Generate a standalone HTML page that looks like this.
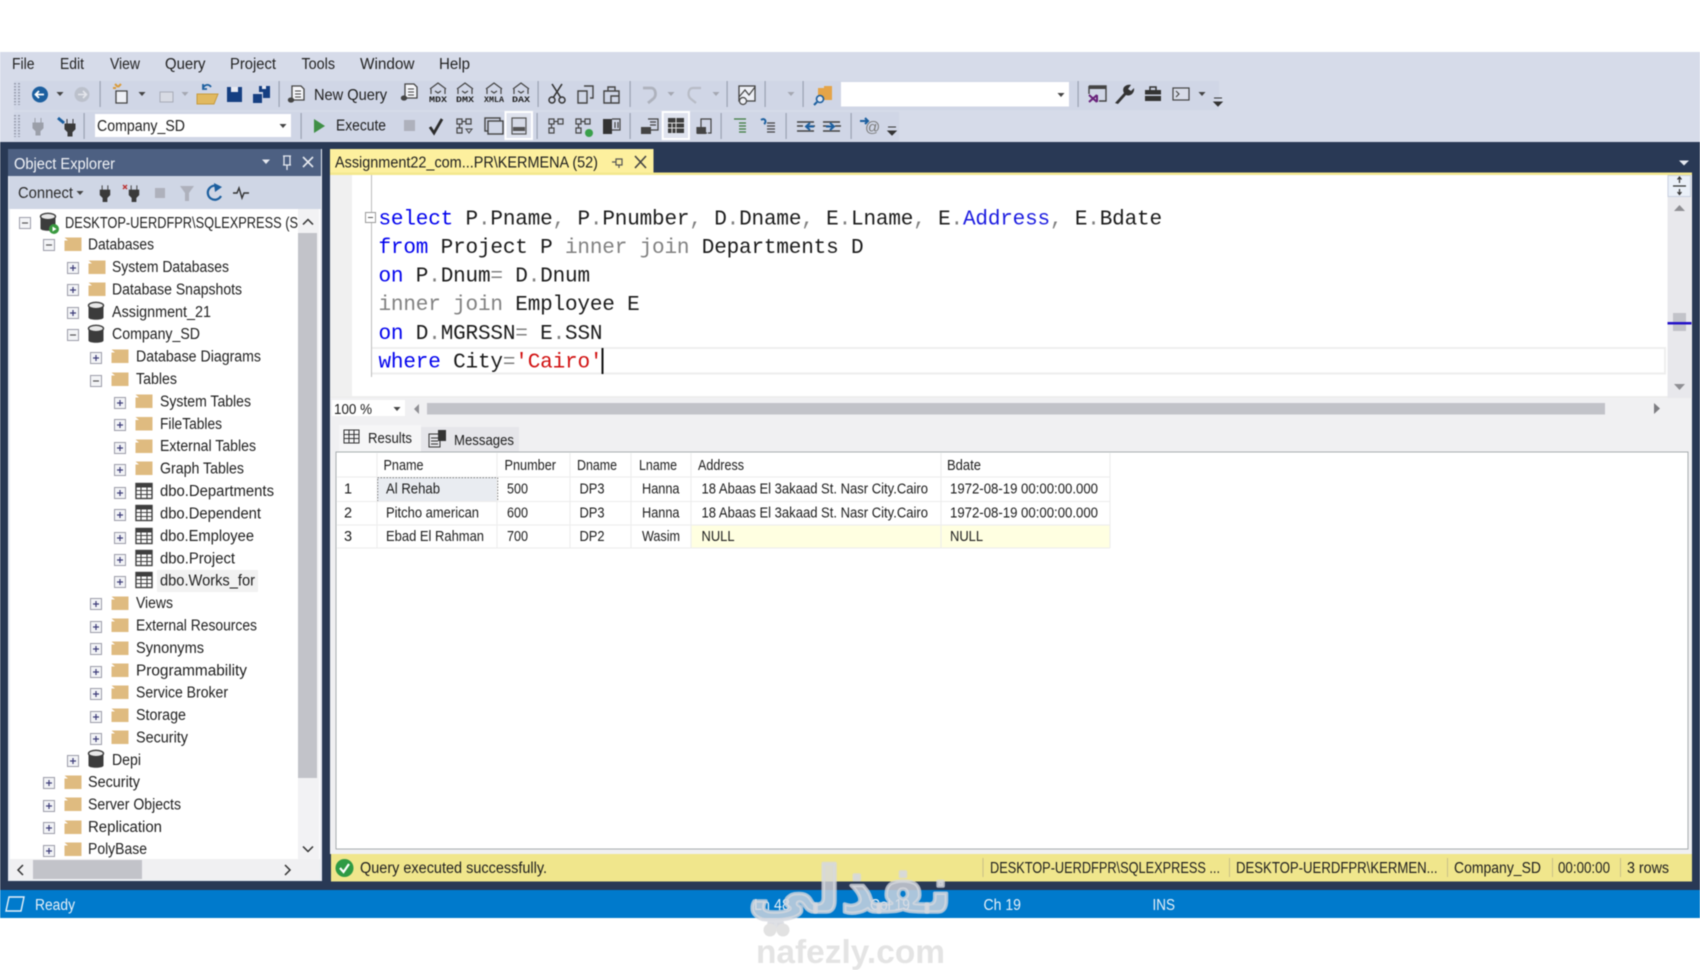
<!DOCTYPE html>
<html><head><meta charset="utf-8"><title>SSMS</title>
<style>
html,body{margin:0;padding:0;background:#fff;width:1700px;height:970px;overflow:hidden}
svg{display:block;filter:blur(.55px)}
text{font-family:"Liberation Sans",sans-serif;font-size:15.5px;fill:#1e1e1e;white-space:pre}
.m{font-size:15.5px;fill:#222}
.g{font-size:14.5px;fill:#1c1c1c}
.c{font-family:"Liberation Mono",monospace;font-size:21px;letter-spacing:-.17px;fill:#1a1a1a}
.s{fill:#e6f0f8;font-size:15.5px}
</style></head><body>
<svg width="1700" height="970" viewBox="0 0 1700 970" xmlns="http://www.w3.org/2000/svg">
<defs>
<g id="plus"><rect x="-5.5" y="-5.5" width="11" height="11" fill="#f3f4f7" stroke="#9c9ca8"/><path d="M-3,0H3M0,-3V3" stroke="#3c3c78" stroke-width="1.2"/></g>
<g id="minus"><rect x="-5.5" y="-5.5" width="11" height="11" fill="#f3f4f7" stroke="#9c9ca8"/><path d="M-3,0H3" stroke="#555" stroke-width="1.2"/></g>
<path id="folder" d="M-8.5,-6.5H8.5V7H-8.5V-3.5L-5,-3.5Z" fill="#dfbb80"/>
<g id="db"><path d="M-7.5,-6V6.5C-7.5,9.5 7.5,9.5 7.5,6.5V-6Z" fill="#3c3c3c"/><ellipse cx="0" cy="-5.5" rx="7.5" ry="3.2" fill="#e8e8e8" stroke="#3c3c3c" stroke-width="1.4"/></g>
<g id="tbl"><rect x="-8" y="-7.5" width="16" height="15" fill="#fff" stroke="#3f3f3f" stroke-width="1.4"/><rect x="-8" y="-7.5" width="16" height="4" fill="#3f3f3f"/><path d="M-8,-.5H8M-8,3.5H8M-3,-7V7.5M3,-7V7.5" stroke="#3f3f3f" stroke-width="1.1"/></g>
<g id="arr"><path d="M-3.5,-2H3.5L0,2Z" fill="#444"/></g>
<g id="arrg"><path d="M-3.5,-2H3.5L0,2Z" fill="#a5a8b2"/></g>
<g id="sep"><rect x="-.5" y="-13" width="1.2" height="26" fill="#9ba2b3"/></g>
<g id="grip"><path d="M-3,-11V11M1,-11V11" stroke="#9a9faf" stroke-width="2" stroke-dasharray="1.5 1.5"/></g>
<g id="cube"><path d="M-8,-1L0,-7L8,-1M-7,-1V4M7,-1V4M-3,1L0,3L3,1" fill="none" stroke="#444" stroke-width="1.2"/></g>
<g id="doc"><path d="M-6,-8H3L6,-5V6H-6Z" fill="#f5f6fa" stroke="#444" stroke-width="1.3"/><path d="M-3,-3H3M-3,0H3M-3,3H3" stroke="#444" stroke-width="1.1"/><ellipse cx="-7" cy="6" rx="3.2" ry="2.6" fill="#444"/></g>
<g id="tree"><path d="M-7,-7H-2V-2H-7ZM2,-7H7V-2H2ZM-7,2H-2V7H-7ZM-2,-4.5H2M-4.5,-2V2" fill="none" stroke="#444" stroke-width="1.2"/></g>
<g id="plug"><path d="M-3,-8V-3M3,-8V-3M-5,-3H5V2L2,5V9H-2V5L-5,2Z" fill="#3a3a3a" stroke="#3a3a3a"/></g>
</defs>

<!-- page -->
<rect width="1700" height="970" fill="#fff"/>
<rect y="52" width="1700" height="90" fill="#d6dbe9"/>
<rect x="14" y="81" width="1205" height="29" fill="#d0d6e6"/>
<rect x="14" y="112" width="885" height="29" fill="#d0d6e6"/>
<rect y="142" width="1700" height="750" fill="#293955"/>
<rect y="890" width="1700" height="28" fill="#007acc"/>

<!-- menu -->
<text class="m" x="12" y="69" textLength="22.5" lengthAdjust="spacingAndGlyphs">File</text>
<text class="m" x="60" y="69" textLength="24" lengthAdjust="spacingAndGlyphs">Edit</text>
<text class="m" x="110" y="69" textLength="30" lengthAdjust="spacingAndGlyphs">View</text>
<text class="m" x="165" y="69" textLength="40.5" lengthAdjust="spacingAndGlyphs">Query</text>
<text class="m" x="230" y="69" textLength="46" lengthAdjust="spacingAndGlyphs">Project</text>
<text class="m" x="301.5" y="69" textLength="33.5" lengthAdjust="spacingAndGlyphs">Tools</text>
<text class="m" x="360" y="69" textLength="54.5" lengthAdjust="spacingAndGlyphs">Window</text>
<text class="m" x="439" y="69" textLength="31" lengthAdjust="spacingAndGlyphs">Help</text>

<!-- toolbar row 1 -->
<use href="#grip" x="18" y="94"/>
<circle cx="40" cy="94.5" r="8" fill="#1c5f9f"/><path d="M44,94.5H36M39,91L35.5,94.5L39,98" stroke="#fff" stroke-width="1.8" fill="none"/>
<use href="#arr" x="60" y="94"/>
<circle cx="82" cy="94.5" r="7.5" fill="#bcc1cc"/><path d="M78,94.5H86M83,91L86.5,94.5L83,98" stroke="#e4e6ec" stroke-width="1.6" fill="none"/>
<use href="#sep" x="100" y="94"/>
<path d="M116,91H127V103H116Z" fill="#eef0f6" stroke="#444" stroke-width="1.3"/><path d="M118,87l-3,-3M118,87l3,-3M113,88h3" stroke="#d99a3a" stroke-width="2"/>
<use href="#arr" x="142" y="94"/>
<path d="M160,92H173V102H160Z" fill="#d8dbe4" stroke="#a8acb8"/>
<use href="#arrg" x="185" y="94"/>
<path d="M197,94V104H214L218,94Z" fill="#e1b960" stroke="#c69a3d"/><path d="M203,88C205,84 209,84 211,87M203,84V89H207" fill="none" stroke="#1c5f9f" stroke-width="1.8"/>
<path d="M227,87H242V102H227Z" fill="#153f82"/><rect x="231" y="87" width="7" height="5" fill="#e8eaf2"/>
<path d="M253,94H262V103H253Z" fill="#153f82"/><path d="M259,86H270V98H263V92H259Z" fill="#153f82"/><rect x="262" y="86" width="4" height="3" fill="#e8eaf2"/>
<use href="#sep" x="279" y="94"/>
<use href="#doc" x="298" y="94"/>
<text x="314" y="100" textLength="73" lengthAdjust="spacingAndGlyphs" style="font-size:16px">New Query</text>
<use href="#doc" x="411" y="92"/>
<use href="#cube" x="438" y="90"/><text x="429" y="102" textLength="18" lengthAdjust="spacingAndGlyphs" style="font-size:8px;font-weight:bold;font-family:'Liberation Mono'">MDX</text>
<use href="#cube" x="465" y="90"/><text x="456" y="102" textLength="18" lengthAdjust="spacingAndGlyphs" style="font-size:8px;font-weight:bold;font-family:'Liberation Mono'">DMX</text>
<use href="#cube" x="494" y="90"/><text x="484" y="102" textLength="20" lengthAdjust="spacingAndGlyphs" style="font-size:8px;font-weight:bold;font-family:'Liberation Mono'">XMLA</text>
<use href="#cube" x="521" y="90"/><text x="512" y="102" textLength="18" lengthAdjust="spacingAndGlyphs" style="font-size:8px;font-weight:bold;font-family:'Liberation Mono'">DAX</text>
<use href="#sep" x="538" y="94"/>
<path d="M552,84L561,98M562,84L553,98" stroke="#333" stroke-width="1.6"/><circle cx="552" cy="100" r="3" fill="none" stroke="#333" stroke-width="1.5"/><circle cx="562" cy="100" r="3" fill="none" stroke="#333" stroke-width="1.5"/>
<path d="M584,86H593V98H590M578,91H587V103H578Z" fill="none" stroke="#444" stroke-width="1.4"/>
<path d="M604,91H619V103H604ZM608,91V87H615V91M611,103V96H619" fill="none" stroke="#444" stroke-width="1.4"/>
<use href="#sep" x="630" y="94"/>
<path d="M643,88H651C656,88 657,96 653,99L648,103" fill="none" stroke="#aeb2bd" stroke-width="2.8"/><use href="#arrg" x="671" y="94"/>
<path d="M701,88H693C688,88 687,96 691,99L696,103" fill="none" stroke="#b8bcc6" stroke-width="2.2"/><use href="#arrg" x="716" y="94"/>
<use href="#sep" x="727" y="94"/>
<rect x="739" y="86" width="16" height="15" fill="#eef0f6" stroke="#444" stroke-width="1.3"/><path d="M739,97L745,90L749,95L755,87" fill="none" stroke="#444" stroke-width="1.2"/><circle cx="743" cy="101" r="3.5" fill="#eef0f6" stroke="#444" stroke-width="1.2"/>
<use href="#sep" x="765" y="94"/>
<use href="#arrg" x="791" y="94"/>
<use href="#sep" x="803" y="94"/>
<path d="M818,88H832V100H818Z" fill="#e5a448"/><path d="M824,86H832V89H824Z" fill="#e5a448"/><circle cx="820" cy="99" r="3.5" fill="#dfe4ef" stroke="#1c5f9f" stroke-width="1.6"/><path d="M817,102L814,105" stroke="#1c5f9f" stroke-width="2"/>
<rect x="841" y="82" width="228" height="24.5" fill="#fff"/><use href="#arr" x="1061" y="95"/>
<use href="#sep" x="1078" y="94"/>
<path d="M1089,86H1106V101H1099M1089,86V94" fill="none" stroke="#444" stroke-width="1.4"/><rect x="1089" y="86" width="17" height="3" fill="#444"/><path d="M1089,95L1097,102M1097,95L1089,102M1097,95V102" fill="none" stroke="#68217a" stroke-width="2"/>
<path d="M1115,103L1124,93C1121,87 1127,84 1131,85L1128,89L1131,91L1134,88C1135,93 1130,97 1126,95L1118,104Z" fill="#333"/>
<rect x="1145" y="90" width="16" height="11" fill="#333"/><path d="M1150,90V87H1156V90" fill="none" stroke="#333" stroke-width="1.5"/><rect x="1145" y="94.5" width="16" height="1.4" fill="#d0d6e6"/>
<rect x="1173" y="88" width="16" height="12" fill="#d8dce8" stroke="#444" stroke-width="1.2"/><path d="M1176,91L1179,94L1176,97" fill="none" stroke="#444" stroke-width="1.1"/>
<use href="#arr" x="1202" y="94"/>
<path d="M1214,98H1222M1214,102H1222L1218,106Z" fill="#333" stroke="#333"/>

<!-- toolbar row 2 -->
<use href="#grip" x="18" y="126"/>
<g opacity=".35"><use href="#plug" x="38" y="126"/></g>
<use href="#plug" x="70" y="127"/><path d="M58,118L64,123" stroke="#1c5f9f" stroke-width="3"/>
<use href="#sep" x="84" y="126"/>
<rect x="95" y="114" width="196" height="23" fill="#fff"/>
<text x="97" y="131" textLength="88" lengthAdjust="spacingAndGlyphs">Company_SD</text><use href="#arr" x="283" y="126"/>
<use href="#sep" x="301" y="126"/>
<path d="M314,119L325,126L314,133Z" fill="#3f8f45"/>
<text x="336" y="130.5" textLength="50" lengthAdjust="spacingAndGlyphs">Execute</text>
<rect x="404" y="120" width="11" height="11" fill="#aeb1bc"/>
<path d="M430,127L434,133L442,119" fill="none" stroke="#2d2d2d" stroke-width="2.8"/>
<use href="#tree" x="464" y="126"/><path d="M466,129H472L469,133Z" fill="none" stroke="#444"/>
<rect x="485" y="118" width="15" height="13" fill="none" stroke="#444" stroke-width="1.4"/><rect x="488" y="121" width="15" height="13" fill="#d0d6e6" stroke="#444" stroke-width="1.4"/>
<rect x="505.5" y="112" width="26.5" height="27" fill="#dfe3ee" stroke="#fff" stroke-width="2"/><rect x="512" y="118" width="14" height="16" fill="#d6dae6" stroke="#555" stroke-width="1.2"/><rect x="513" y="127" width="12" height="4" fill="#555"/>
<use href="#sep" x="537" y="126"/>
<use href="#tree" x="556" y="126"/>
<use href="#tree" x="583" y="126"/><circle cx="589" cy="133" r="4" fill="#3aa04a"/>
<rect x="603" y="119" width="9" height="15" fill="#333"/><path d="M612,119H620V130H612M615,122V128M618,122V128" fill="none" stroke="#444" stroke-width="1.2"/>
<use href="#sep" x="630" y="126"/>
<path d="M648,119H658V130H648M650,122H656M650,125H656" fill="none" stroke="#444" stroke-width="1.2"/><rect x="641" y="127" width="10" height="7" fill="#444"/>
<rect x="662.7" y="112" width="26.3" height="27" fill="#dfe3ee" stroke="#fff" stroke-width="2"/><rect x="668" y="118" width="16" height="15" fill="#3d3d3d"/><path d="M668,123H684M668,128H684M676,118V133M672,123V133" stroke="#ddd" stroke-width="1"/>
<path d="M697,127V133H707M701,127V119H711V133H708" fill="none" stroke="#444" stroke-width="1.2"/><rect x="697" y="127" width="9" height="7" fill="#444"/>
<use href="#sep" x="721" y="126"/>
<path d="M734,119H746M739,123H746M739,126H746M739,129H746M739,132H746" stroke="#3d7a3d" stroke-width="1.2"/>
<path d="M761,120C765,117 767,122 764,124" fill="none" stroke="#1c5f9f" stroke-width="2"/><path d="M767,123H775M767,126H775M767,129H775M767,132H775" stroke="#444" stroke-width="1.2"/>
<path d="M797,122H814M797,131H814M797,126H803M809,126H815" stroke="#444" stroke-width="1.4"/><path d="M814,126.5H806M810,123L806,126.5L810,130" fill="none" stroke="#1c5f9f" stroke-width="2"/>
<path d="M823,122H840M823,131H840M823,126H829M835,126H841" stroke="#444" stroke-width="1.4"/><path d="M826,126.5H834M830,123L834,126.5L830,130" fill="none" stroke="#1c5f9f" stroke-width="2"/>
<use href="#sep" x="786" y="126"/>
<use href="#sep" x="851" y="126"/>
<path d="M860,121H868M865,118L868,121L865,124" fill="none" stroke="#1c5f9f" stroke-width="2"/><text x="865" y="132" style="font-size:15px;fill:#777">@</text>
<path d="M888,127H896M888,131H896L892,135Z" fill="#333" stroke="#333"/>

<!-- object explorer -->
<rect x="8" y="149" width="314" height="732" fill="#e8ecf4"/>
<rect x="8" y="149" width="313" height="27" fill="#4d6082"/>
<text x="14" y="169" textLength="101" lengthAdjust="spacingAndGlyphs" style="fill:#f0f2f6">Object Explorer</text>
<path d="M262,159.5H270L266,164Z" fill="#e6e9f0"/>
<path d="M284,156V165M290,156V165M283,156H291M283,165H291M287,165V170" fill="none" stroke="#e6e9f0" stroke-width="1.3"/>
<path d="M303,157L313,167M313,157L303,167" stroke="#e6e9f0" stroke-width="1.6"/>
<rect x="9" y="176" width="312" height="33" fill="#cfd6e5"/>
<text x="18" y="198" textLength="55" lengthAdjust="spacingAndGlyphs" style="fill:#2a2a2a">Connect</text><use href="#arr" x="80" y="193"/>
<g transform="translate(105,193) scale(.95)"><use href="#plug"/></g>
<g transform="translate(134,193) scale(.95)"><use href="#plug"/></g><path d="M123,185L127,189M127,185L123,189" stroke="#b33" stroke-width="1.4"/>
<rect x="155" y="188" width="10" height="10" fill="#aeb1bc"/>
<path d="M180,186H194L189,193V201H185V193Z" fill="#aeb1bc"/>
<path d="M220,188A7,7 0 1 0 221,196" fill="none" stroke="#1c5f9f" stroke-width="2.2"/><path d="M214,183L222,187L215,192Z" fill="#1c5f9f"/>
<path d="M233,193H237L239,188L242,198L244,193H249" fill="none" stroke="#333" stroke-width="1.4"/>

<rect x="10" y="209" width="310" height="650" fill="#fff"/>
<rect x="298" y="209" width="21" height="650" fill="#f2f2f4"/>
<rect x="298" y="233" width="19" height="545" fill="#c2c3c9"/>
<path d="M303,224.5L308,219.5L313,224.5" fill="none" stroke="#333" stroke-width="1.5"/>
<path d="M303,846.5L308,851.5L313,846.5" fill="none" stroke="#333" stroke-width="1.5"/>
<rect x="10" y="859" width="310" height="21" fill="#f0f0f2"/>
<rect x="33" y="860" width="109" height="19" fill="#c2c3c9"/>
<path d="M23,865L18,870L23,875" fill="none" stroke="#333" stroke-width="1.5"/>
<path d="M285,865L290,870L285,875" fill="none" stroke="#333" stroke-width="1.5"/>
<rect x="157" y="570" width="101" height="22" fill="#f2f2f2"/>

<!-- tree -->
<use href="#minus" x="25" y="223"/>
<use href="#db" x="48" y="222"/><circle cx="54" cy="229" r="5" fill="#3a9a40"/><path d="M52.5,226.5L56.5,229L52.5,231.5Z" fill="#fff"/>
<text x="65" y="228" textLength="233" lengthAdjust="spacingAndGlyphs">DESKTOP-UERDFPR\SQLEXPRESS (S</text>
<use href="#minus" x="49" y="245"/><use href="#folder" x="73" y="244"/><text x="88" y="249.5" textLength="66" lengthAdjust="spacingAndGlyphs">Databases</text>
<use href="#plus" x="73" y="268"/><use href="#folder" x="97" y="267"/><text x="112" y="272" textLength="117" lengthAdjust="spacingAndGlyphs">System Databases</text>
<use href="#plus" x="73" y="290"/><use href="#folder" x="97" y="289"/><text x="112" y="294.5" textLength="130" lengthAdjust="spacingAndGlyphs">Database Snapshots</text>
<use href="#plus" x="73" y="313"/><use href="#db" x="96" y="311"/><text x="112" y="317" textLength="99" lengthAdjust="spacingAndGlyphs">Assignment_21</text>
<use href="#minus" x="73" y="335"/><use href="#db" x="96" y="334"/><text x="112" y="339" textLength="88" lengthAdjust="spacingAndGlyphs">Company_SD</text>
<use href="#plus" x="96" y="358"/><use href="#folder" x="120" y="356"/><text x="136" y="361.5" textLength="125" lengthAdjust="spacingAndGlyphs">Database Diagrams</text>
<use href="#minus" x="96" y="381"/><use href="#folder" x="120" y="379"/><text x="136" y="384" textLength="41" lengthAdjust="spacingAndGlyphs">Tables</text>
<use href="#plus" x="120" y="403"/><use href="#folder" x="144" y="401"/><text x="160" y="406.5" textLength="91" lengthAdjust="spacingAndGlyphs">System Tables</text>
<use href="#plus" x="120" y="425"/><use href="#folder" x="144" y="423.5"/><text x="160" y="429" textLength="62" lengthAdjust="spacingAndGlyphs">FileTables</text>
<use href="#plus" x="120" y="448"/><use href="#folder" x="144" y="446"/><text x="160" y="451" textLength="96" lengthAdjust="spacingAndGlyphs">External Tables</text>
<use href="#plus" x="120" y="470"/><use href="#folder" x="144" y="468"/><text x="160" y="473.5" textLength="84" lengthAdjust="spacingAndGlyphs">Graph Tables</text>
<use href="#plus" x="120" y="493"/><use href="#tbl" x="144" y="491"/><text x="160" y="496" textLength="114" lengthAdjust="spacingAndGlyphs">dbo.Departments</text>
<use href="#plus" x="120" y="515"/><use href="#tbl" x="144" y="513"/><text x="160" y="518.5" textLength="101" lengthAdjust="spacingAndGlyphs">dbo.Dependent</text>
<use href="#plus" x="120" y="538"/><use href="#tbl" x="144" y="536"/><text x="160" y="541" textLength="94" lengthAdjust="spacingAndGlyphs">dbo.Employee</text>
<use href="#plus" x="120" y="560"/><use href="#tbl" x="144" y="558"/><text x="160" y="563.5" textLength="75" lengthAdjust="spacingAndGlyphs">dbo.Project</text>
<use href="#plus" x="120" y="582"/><use href="#tbl" x="144" y="580"/><text x="160" y="585.5" textLength="95" lengthAdjust="spacingAndGlyphs">dbo.Works_for</text>
<use href="#plus" x="96" y="604"/><use href="#folder" x="120" y="603"/><text x="136" y="608" textLength="37" lengthAdjust="spacingAndGlyphs">Views</text>
<use href="#plus" x="96" y="627"/><use href="#folder" x="120" y="625"/><text x="136" y="630.5" textLength="121" lengthAdjust="spacingAndGlyphs">External Resources</text>
<use href="#plus" x="96" y="649"/><use href="#folder" x="120" y="648"/><text x="136" y="653" textLength="68" lengthAdjust="spacingAndGlyphs">Synonyms</text>
<use href="#plus" x="96" y="672"/><use href="#folder" x="120" y="670"/><text x="136" y="675.5" textLength="111" lengthAdjust="spacingAndGlyphs">Programmability</text>
<use href="#plus" x="96" y="694"/><use href="#folder" x="120" y="692"/><text x="136" y="697.5" textLength="92" lengthAdjust="spacingAndGlyphs">Service Broker</text>
<use href="#plus" x="96" y="717"/><use href="#folder" x="120" y="715"/><text x="136" y="720" textLength="50" lengthAdjust="spacingAndGlyphs">Storage</text>
<use href="#plus" x="96" y="739"/><use href="#folder" x="120" y="737"/><text x="136" y="742.5" textLength="52" lengthAdjust="spacingAndGlyphs">Security</text>
<use href="#plus" x="73" y="761"/><use href="#db" x="96" y="759"/><text x="112" y="765" textLength="29" lengthAdjust="spacingAndGlyphs">Depi</text>
<use href="#plus" x="49" y="783"/><use href="#folder" x="73" y="782"/><text x="88" y="787" textLength="52" lengthAdjust="spacingAndGlyphs">Security</text>
<use href="#plus" x="49" y="806"/><use href="#folder" x="73" y="804"/><text x="88" y="809.5" textLength="93" lengthAdjust="spacingAndGlyphs">Server Objects</text>
<use href="#plus" x="49" y="828"/><use href="#folder" x="73" y="827"/><text x="88" y="832" textLength="74" lengthAdjust="spacingAndGlyphs">Replication</text>
<use href="#plus" x="49" y="851"/><use href="#folder" x="73" y="849"/><text x="88" y="854" textLength="59" lengthAdjust="spacingAndGlyphs">PolyBase</text>

<!-- doc tab -->
<rect x="330" y="149" width="323.5" height="26" fill="#fdf09e"/>
<rect x="330" y="172.5" width="1362" height="2.5" fill="#f4e88e"/>
<text x="335" y="167.5" textLength="263" lengthAdjust="spacingAndGlyphs">Assignment22_com...PR\KERMENA (52)</text>
<path d="M612,162H616M616,159H622V165H616ZM619,165V168" fill="none" stroke="#555" stroke-width="1.2"/>
<path d="M635,156L646,168M646,156L635,168" stroke="#444" stroke-width="1.6"/>
<path d="M1679,160.5H1689L1684,165.5Z" fill="#e6e9f0"/>

<!-- editor -->
<rect x="330" y="175" width="1362" height="223" fill="#fff"/>
<rect x="330" y="175" width="22" height="223" fill="#f0f0f0"/>
<rect x="371" y="175" width="1" height="202" fill="#bdbdbd"/>
<rect x="365.5" y="212.5" width="10" height="10" fill="#fff" stroke="#9a9a9a"/><path d="M368,217.5H373" stroke="#555"/>
<rect x="372" y="347" width="1294" height="2" fill="#eeeeee"/>
<rect x="372" y="372.5" width="1294" height="2" fill="#eeeeee"/>
<rect x="1664" y="347" width="2" height="27" fill="#eeeeee"/>
<rect x="330" y="396" width="1338" height="2" fill="#eeeeee"/>

<text class="c" x="378.5" y="224.5"><tspan fill="#0000ee">select</tspan> P<tspan fill="#808080">.</tspan>Pname<tspan fill="#808080">,</tspan> P<tspan fill="#808080">.</tspan>Pnumber<tspan fill="#808080">,</tspan> D<tspan fill="#808080">.</tspan>Dname<tspan fill="#808080">,</tspan> E<tspan fill="#808080">.</tspan>Lname<tspan fill="#808080">,</tspan> E<tspan fill="#808080">.</tspan><tspan fill="#1a1ae0">Address</tspan><tspan fill="#808080">,</tspan> E<tspan fill="#808080">.</tspan>Bdate</text>
<text class="c" x="378.5" y="253"><tspan fill="#0000ee">from</tspan> Project P <tspan fill="#808080">inner join</tspan> Departments D</text>
<text class="c" x="378.5" y="281.5"><tspan fill="#0000ee">on</tspan> P<tspan fill="#808080">.</tspan>Dnum<tspan fill="#808080">=</tspan> D<tspan fill="#808080">.</tspan>Dnum</text>
<text class="c" x="378.5" y="310"><tspan fill="#808080">inner join</tspan> Employee E</text>
<text class="c" x="378.5" y="339"><tspan fill="#0000ee">on</tspan> D<tspan fill="#808080">.</tspan>MGRSSN<tspan fill="#808080">=</tspan> E<tspan fill="#808080">.</tspan>SSN</text>
<text class="c" x="378.5" y="367.5"><tspan fill="#0000ee">where</tspan> City<tspan fill="#808080">=</tspan><tspan fill="#d11010">'Cairo'</tspan></text>
<rect x="601.5" y="348" width="2" height="26" fill="#111"/>

<!-- right scrollbar -->
<rect x="1667.5" y="175" width="24" height="225" fill="#e8e8ec"/>
<rect x="1668" y="175.5" width="22.5" height="21" fill="#eaf0f8" stroke="#c8d0e0"/>
<path d="M1673,186H1686M1679.5,177V183M1677.5,179.5L1679.5,177L1681.5,179.5M1679.5,189V194M1677.5,192L1679.5,194.5L1681.5,192" fill="none" stroke="#333" stroke-width="1.2"/>
<path d="M1674,211H1685L1679.5,205Z" fill="#8f8f94"/>
<path d="M1674,384H1685L1679.5,390Z" fill="#8f8f94"/>
<rect x="1673" y="313" width="13" height="18" fill="#c2c3c9"/>
<rect x="1667.5" y="322" width="24" height="2.5" fill="#2412c8"/>

<!-- hscroll row + results bg -->
<rect x="330" y="398" width="1362" height="456" fill="#f0f0f2"/>
<rect x="332" y="400" width="73" height="16" fill="#fff"/>
<text class="g" x="334" y="414" textLength="38" lengthAdjust="spacingAndGlyphs">100 %</text>
<use href="#arr" x="397" y="409"/>
<path d="M419,404V414L414,409Z" fill="#8f8f94"/>
<rect x="427" y="403" width="1178" height="11.5" fill="#c2c3c9"/>
<path d="M1654,403V414L1660,408.5Z" fill="#7d7d82"/>

<!-- tabs -->
<rect x="339" y="425" width="82" height="27" fill="#f6f6f7"/>
<rect x="421" y="427" width="98" height="25" fill="#e6e6ea"/>
<g fill="none" stroke="#333"><rect x="344" y="430" width="15" height="13"/><path d="M344,434.5H359M344,438.5H359M349,430V443M354,430V443"/></g>
<text class="g" x="368" y="443" textLength="44" lengthAdjust="spacingAndGlyphs">Results</text>
<g fill="none" stroke="#333"><rect x="429" y="434" width="11" height="13"/><path d="M431,438H438M431,441H438M431,444H438"/></g><rect x="438" y="430" width="8" height="11" fill="#333"/>
<text class="g" x="454" y="445" textLength="60" lengthAdjust="spacingAndGlyphs">Messages</text>

<!-- grid -->
<rect x="336" y="452" width="1352" height="397" fill="#fff" stroke="#a8aeb0"/>
<rect x="691" y="525" width="419" height="23" fill="#ffffe1"/>
<rect x="377.5" y="477.5" width="120" height="24" fill="#e9ecf1" stroke="#222" stroke-dasharray="1.5 1.5"/>
<g stroke="#ececec"><path d="M377,453V548M497,453V548M570,453V548M631,453V548M691,453V548M941,453V548M1110,453V548M337,477H1110M337,501.5H1110M337,525H1110M337,548H1110" fill="none"/></g>
<text class="g" x="383.5" y="470" textLength="40" lengthAdjust="spacingAndGlyphs">Pname</text>
<text class="g" x="504.5" y="470" textLength="51.5" lengthAdjust="spacingAndGlyphs">Pnumber</text>
<text class="g" x="577" y="470" textLength="40" lengthAdjust="spacingAndGlyphs">Dname</text>
<text class="g" x="639" y="470" textLength="38" lengthAdjust="spacingAndGlyphs">Lname</text>
<text class="g" x="698" y="470" textLength="46" lengthAdjust="spacingAndGlyphs">Address</text>
<text class="g" x="947" y="470" textLength="34" lengthAdjust="spacingAndGlyphs">Bdate</text>

<text class="g" x="344" y="493.5">1</text>
<text class="g" x="386" y="493.5" textLength="54" lengthAdjust="spacingAndGlyphs">Al Rehab</text>
<text class="g" x="507" y="493.5" textLength="21" lengthAdjust="spacingAndGlyphs">500</text>
<text class="g" x="579.5" y="493.5" textLength="25" lengthAdjust="spacingAndGlyphs">DP3</text>
<text class="g" x="642" y="493.5" textLength="37.5" lengthAdjust="spacingAndGlyphs">Hanna</text>
<text class="g" x="701.5" y="493.5" textLength="226.5" lengthAdjust="spacingAndGlyphs">18 Abaas El 3akaad St. Nasr City.Cairo</text>
<text class="g" x="950" y="493.5" textLength="148" lengthAdjust="spacingAndGlyphs">1972-08-19 00:00:00.000</text>

<text class="g" x="344" y="517.5">2</text>
<text class="g" x="386" y="517.5" textLength="93" lengthAdjust="spacingAndGlyphs">Pitcho american</text>
<text class="g" x="507" y="517.5" textLength="21" lengthAdjust="spacingAndGlyphs">600</text>
<text class="g" x="579.5" y="517.5" textLength="25" lengthAdjust="spacingAndGlyphs">DP3</text>
<text class="g" x="642" y="517.5" textLength="37.5" lengthAdjust="spacingAndGlyphs">Hanna</text>
<text class="g" x="701.5" y="517.5" textLength="226.5" lengthAdjust="spacingAndGlyphs">18 Abaas El 3akaad St. Nasr City.Cairo</text>
<text class="g" x="950" y="517.5" textLength="148" lengthAdjust="spacingAndGlyphs">1972-08-19 00:00:00.000</text>

<text class="g" x="344" y="541">3</text>
<text class="g" x="386" y="541" textLength="98" lengthAdjust="spacingAndGlyphs">Ebad El Rahman</text>
<text class="g" x="507" y="541" textLength="21" lengthAdjust="spacingAndGlyphs">700</text>
<text class="g" x="579.5" y="541" textLength="25" lengthAdjust="spacingAndGlyphs">DP2</text>
<text class="g" x="642" y="541" textLength="38" lengthAdjust="spacingAndGlyphs">Wasim</text>
<text class="g" x="701.5" y="541" textLength="33" lengthAdjust="spacingAndGlyphs">NULL</text>
<text class="g" x="950" y="541" textLength="33" lengthAdjust="spacingAndGlyphs">NULL</text>

<!-- yellow status -->
<rect x="331" y="854" width="1361" height="27.5" fill="#f0e68c"/>
<circle cx="344.5" cy="868" r="9" fill="#2e9a44"/><path d="M340,868L343.5,872L349,864" fill="none" stroke="#fff" stroke-width="2.2"/>
<text x="360" y="873" textLength="187" lengthAdjust="spacingAndGlyphs">Query executed successfully.</text>
<g fill="#c8c088"><rect x="982.5" y="858" width="1" height="19"/><rect x="1229" y="858" width="1" height="19"/><rect x="1447" y="858" width="1" height="19"/><rect x="1552" y="858" width="1" height="19"/><rect x="1620" y="858" width="1" height="19"/></g>
<text x="990" y="873" textLength="230" lengthAdjust="spacingAndGlyphs">DESKTOP-UERDFPR\SQLEXPRESS ...</text>
<text x="1236" y="873" textLength="201.6" lengthAdjust="spacingAndGlyphs">DESKTOP-UERDFPR\KERMEN...</text>
<text x="1454" y="873" textLength="87" lengthAdjust="spacingAndGlyphs">Company_SD</text>
<text x="1558" y="873" textLength="52" lengthAdjust="spacingAndGlyphs">00:00:00</text>
<text x="1627" y="873" textLength="42" lengthAdjust="spacingAndGlyphs">3 rows</text>

<!-- blue status -->
<path d="M9,897H24L21,911H6Z" fill="none" stroke="#e6f0f8" stroke-width="1.4"/>
<text class="s" x="35" y="910" textLength="40" lengthAdjust="spacingAndGlyphs">Ready</text>
<text class="s" x="754" y="910" textLength="36" lengthAdjust="spacingAndGlyphs">Ln 48</text>
<text class="s" x="870" y="910" textLength="40" lengthAdjust="spacingAndGlyphs">Col 19</text>
<text class="s" x="983.5" y="910" textLength="37.5" lengthAdjust="spacingAndGlyphs">Ch 19</text>
<text class="s" x="1152.5" y="910" textLength="22.5" lengthAdjust="spacingAndGlyphs">INS</text>

<!-- watermark -->
<text x="850" y="912" text-anchor="middle" direction="rtl" textLength="204" lengthAdjust="spacingAndGlyphs" style="font-family:'DejaVu Sans',sans-serif;font-weight:bold;font-size:64px;fill:#d6d8de;fill-opacity:.8;stroke:#d6d8de;stroke-opacity:.8;stroke-width:3.5;stroke-linejoin:round">نفذلي</text>
<circle cx="770" cy="930" r="6.5" fill="#e2e2e2"/><circle cx="783" cy="930" r="6.5" fill="#e2e2e2"/>
<text x="756" y="963" textLength="189" lengthAdjust="spacingAndGlyphs" style="font-size:33px;font-weight:bold;fill:#e4e4e4">nafezly.com</text>
</svg>
</body></html>
